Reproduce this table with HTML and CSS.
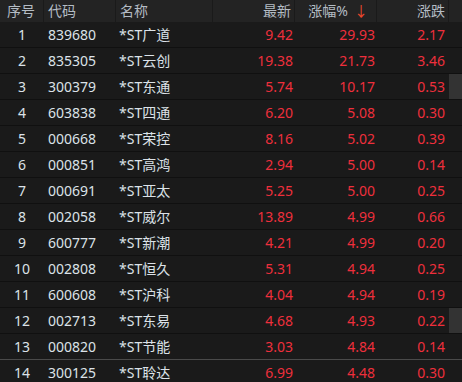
FILE: index.html
```html
<!DOCTYPE html>
<html lang="zh-CN">
<head>
<meta charset="utf-8">
<title>涨幅榜</title>
<link rel="stylesheet" href="styles.css">
</head>
<body>
<div class="quote-table">
  <div class="head row-grid">
    <div class="hc center">序号</div>
    <div class="hc left">代码</div>
    <div class="hc left">名称</div>
    <div class="hc right">最新</div>
    <div class="hc right sorted">涨幅%<span class="arrow">↓</span></div>
    <div class="hc right last">涨跌</div>
    <div class="hc filler"></div>
  </div>
  <div class="rows">
    <div class="row row-grid"><div class="c idx">1</div><div class="c code">839680</div><div class="c name">*ST广道</div><div class="c num">9.42</div><div class="c num">29.93</div><div class="c num lastnum">2.17</div><div class="c side"></div></div>
    <div class="row row-grid"><div class="c idx">2</div><div class="c code">835305</div><div class="c name">*ST云创</div><div class="c num">19.38</div><div class="c num">21.73</div><div class="c num lastnum">3.46</div><div class="c side"></div></div>
    <div class="row row-grid"><div class="c idx">3</div><div class="c code">300379</div><div class="c name">*ST东通</div><div class="c num">5.74</div><div class="c num">10.17</div><div class="c num lastnum">0.53</div><div class="c side thumb"></div></div>
    <div class="row row-grid"><div class="c idx">4</div><div class="c code">603838</div><div class="c name">*ST四通</div><div class="c num">6.20</div><div class="c num">5.08</div><div class="c num lastnum">0.30</div><div class="c side"></div></div>
    <div class="row row-grid"><div class="c idx">5</div><div class="c code">000668</div><div class="c name">*ST荣控</div><div class="c num">8.16</div><div class="c num">5.02</div><div class="c num lastnum">0.39</div><div class="c side"></div></div>
    <div class="row row-grid"><div class="c idx">6</div><div class="c code">000851</div><div class="c name">*ST高鸿</div><div class="c num">2.94</div><div class="c num">5.00</div><div class="c num lastnum">0.14</div><div class="c side"></div></div>
    <div class="row row-grid"><div class="c idx">7</div><div class="c code">000691</div><div class="c name">*ST亚太</div><div class="c num">5.25</div><div class="c num">5.00</div><div class="c num lastnum">0.25</div><div class="c side"></div></div>
    <div class="row row-grid"><div class="c idx">8</div><div class="c code">002058</div><div class="c name">*ST威尔</div><div class="c num">13.89</div><div class="c num">4.99</div><div class="c num lastnum">0.66</div><div class="c side"></div></div>
    <div class="row row-grid"><div class="c idx">9</div><div class="c code">600777</div><div class="c name">*ST新潮</div><div class="c num">4.21</div><div class="c num">4.99</div><div class="c num lastnum">0.20</div><div class="c side"></div></div>
    <div class="row row-grid"><div class="c idx">10</div><div class="c code">002808</div><div class="c name">*ST恒久</div><div class="c num">5.31</div><div class="c num">4.94</div><div class="c num lastnum">0.25</div><div class="c side"></div></div>
    <div class="row row-grid"><div class="c idx">11</div><div class="c code">600608</div><div class="c name">*ST沪科</div><div class="c num">4.04</div><div class="c num">4.94</div><div class="c num lastnum">0.19</div><div class="c side"></div></div>
    <div class="row row-grid"><div class="c idx">12</div><div class="c code">002713</div><div class="c name">*ST东易</div><div class="c num">4.68</div><div class="c num">4.93</div><div class="c num lastnum">0.22</div><div class="c side thumb"></div></div>
    <div class="row row-grid divider"><div class="c idx">13</div><div class="c code">000820</div><div class="c name">*ST节能</div><div class="c num">3.03</div><div class="c num">4.84</div><div class="c num lastnum">0.14</div><div class="c side"></div></div>
    <div class="row row-grid"><div class="c idx">14</div><div class="c code">300125</div><div class="c name">*ST聆达</div><div class="c num">6.99</div><div class="c num">4.48</div><div class="c num lastnum">0.30</div><div class="c side"></div></div>
  </div>
</div>
</body>
</html>
```

FILE: styles.css
```css
html, body {
  margin: 0;
  padding: 0;
  background: #1a1a1a;
  overflow: hidden;
}

body {
  width: 462px;
  height: 382px;
  font-family: "Noto Sans", "Noto Sans CJK SC", sans-serif;
  font-size: 14px;
}

.quote-table {
  width: 462px;
}

.row-grid {
  display: grid;
  grid-template-columns: 44px 72px 97px 82px 82px 72px 13px;
}

.head {
  height: 22px;
  background: #232323;
}

.hc {
  border-right: 1px solid #1a1a1a;
  color: #b4bcc4;
  line-height: 22px;
  white-space: nowrap;
  padding: 0 4px;
}

.hc.filler {
  border-right: none;
  padding: 0;
}

.center { text-align: center; padding-right: 5px; }
.left { text-align: left; padding-left: 4px; }
.right { text-align: right; padding-right: 3px; }
.hc.last { padding-right: 3px; }

.sorted { padding-right: 8px; }

.arrow {
  color: #f0482c;
  margin-left: 6px;
}

.row {
  height: 26px;
  box-sizing: border-box;
  border-bottom: 1px solid #101010;
  background: #1a1a1a;
}

.row.divider {
  border-bottom-color: #4a4a4a;
}

.c {
  line-height: 24px;
  padding-top: 1px;
  white-space: nowrap;
}

.idx {
  text-align: center;
  color: #dce2e8;
}

.code {
  color: #dce2e8;
  padding-left: 4px;
}

.name {
  color: #dce2e8;
  padding-left: 3px;
}

.num {
  text-align: right;
  color: #ee2f3c;
  padding-right: 2px;
}

.lastnum {
  padding-right: 4px;
}

.side {
  padding-top: 0;
}

.side.thumb {
  background: #333333;
}
```
